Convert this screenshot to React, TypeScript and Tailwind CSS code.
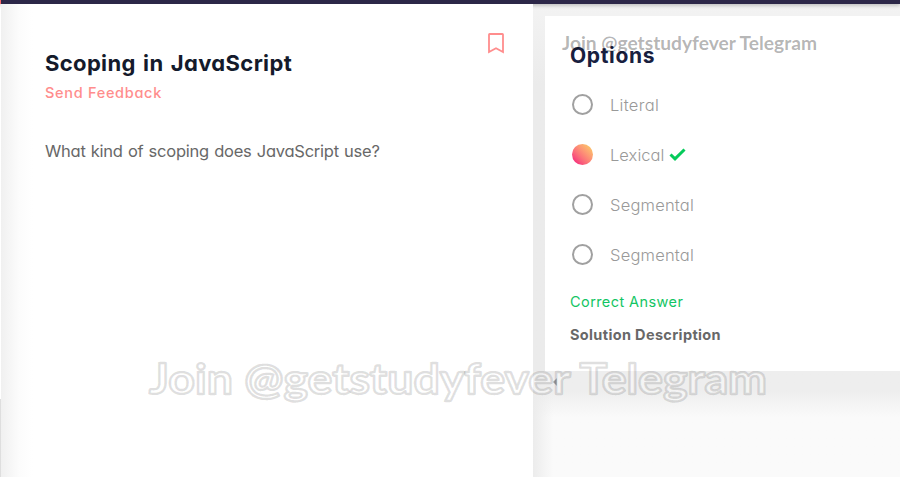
import React from "react";

const options = [
  { label: "Literal", selected: false, spacing: "tracking-[0.3px]" },
  { label: "Lexical", selected: true, spacing: "tracking-[0.05px]" },
  { label: "Segmental", selected: false, spacing: "tracking-[0.2px]" },
  { label: "Segmental", selected: false, spacing: "tracking-[0.2px]" },
];

function Bookmark() {
  return (
    <svg className="mt-[29px] mr-[29px] h-[21px] w-4 shrink-0" viewBox="0 0 16 21" fill="none">
      <path d="M1 1.6Q1 1 1.6 1H14.4Q15 1 15 1.6V19L8 15.2L1 19Z" stroke="#ff8d8d" strokeWidth="1.8" />
    </svg>
  );
}

function Radio({ selected }: { selected: boolean }) {
  return selected ? (
    <span className="h-[21px] w-[21px] rounded-full bg-linear-to-tr from-[#f6347c] from-[15%] to-[#fbc36a] to-[88%]" />
  ) : (
    <span className="h-[21px] w-[21px] rounded-full border-2 border-[#a0a0a0]" />
  );
}

export default function App() {
  return (
    <div className="relative flex h-[477px] w-[900px] flex-col overflow-hidden bg-[#fafafa] font-['Inter',sans-serif] [font-feature-settings:'cv11']">
      <header className="z-10 h-1 shrink-0 border-l border-[#f9686b] bg-[#2c2748] shadow-[0_1px_4px_rgba(0,0,0,0.3)]" />
      <main className="flex min-h-0 flex-1">
        <div className="flex w-px flex-col">
          <div className="h-[395px] bg-white" />
          <div className="flex-1 bg-[#dedede]" />
        </div>
        <section className="z-20 flex w-[532px] shrink-0 justify-between bg-white bg-linear-to-r from-[#f0f0f0] via-[#fcfcfc] via-[18px] to-white to-[32px] pl-11">
          <div className="flex flex-col whitespace-nowrap">
            <h1 className="mt-[45px] h-7 text-[22px] leading-7 font-bold tracking-[0.35px] text-[#141a2b] [word-spacing:1.8px]">Scoping in JavaScript</h1>
            <a className="mt-1.5 h-5 text-[14.5px] leading-5 font-medium tracking-[0.7px] text-[#ff8d8d]">Send Feedback</a>
            <p className="mt-9 h-6 text-[16.5px] leading-6 tracking-[-0.24px] text-[#686868] [word-spacing:0.8px]">What kind of scoping does JavaScript use?</p>
          </div>
          <Bookmark />
        </section>
        <aside className="flex min-w-0 flex-1 flex-col">
          <div className="flex h-[367px] shrink-0 bg-linear-to-b from-[#f3f3f3] to-[#ebebeb] to-[80px] pt-3 pl-3">
            <div className="flex flex-1 flex-col bg-white pl-[25px]">
              <h2 className="mt-[26px] h-7 text-[21px] leading-7 font-bold tracking-[0.65px] text-[#18203f]">Options</h2>
              <div className="mt-[9px] flex flex-col">
                {options.map((o, i) => (
                  <div key={i} className="flex h-[50px] items-center pl-0.5">
                    <Radio selected={o.selected} />
                    <span className={"ml-[17px] pt-0.5 text-[16.5px] font-light text-[#999] " + o.spacing}>{o.label}</span>
                    {o.selected && (
                      <svg className="ml-[5px] h-[13px] w-[17px]" viewBox="0 0 17 13" fill="none">
                        <path d="M1.5 6.5L6 10.8L15.5 1.5" stroke="#05cb5a" strokeWidth="3" />
                      </svg>
                    )}
                  </div>
                ))}
              </div>
              <div className="mt-[11px] h-6 text-[14.5px] leading-6 tracking-[0.42px] text-[#13c563]">Correct Answer</div>
              <div className="mt-[9px] h-6 text-[14.5px] leading-6 font-bold tracking-[0.35px] text-[#686868]">Solution Description</div>
            </div>
          </div>
          <div className="flex flex-1 bg-linear-to-b from-[#eeeeee] from-[20px] to-[#fafafa] to-[46px]">
            <div className="w-5 bg-linear-to-r from-[#ececec] to-transparent">
              <svg className="mt-[7px] ml-5 h-2 w-1" viewBox="0 0 4 8">
                <path d="M4 0V8L0 4Z" fill="#999" />
              </svg>
            </div>
          </div>
        </aside>
      </main>
      <svg className="pointer-events-none absolute inset-0 z-30 h-full w-full [font-feature-settings:normal]">
        <text x="562" y="50" textLength="255" lengthAdjust="spacingAndGlyphs" className="fill-black/30 font-['Lato',sans-serif] text-[18.5px] font-bold">
          Join @getstudyfever Telegram
        </text>
        <text x="149" y="394" textLength="618" lengthAdjust="spacingAndGlyphs" className="fill-white/40 stroke-black/12 font-['Lato',sans-serif] text-[41.5px] font-bold" strokeWidth="2.4" strokeLinejoin="round">
          Join @getstudyfever Telegram
        </text>
      </svg>
    </div>
  );
}
